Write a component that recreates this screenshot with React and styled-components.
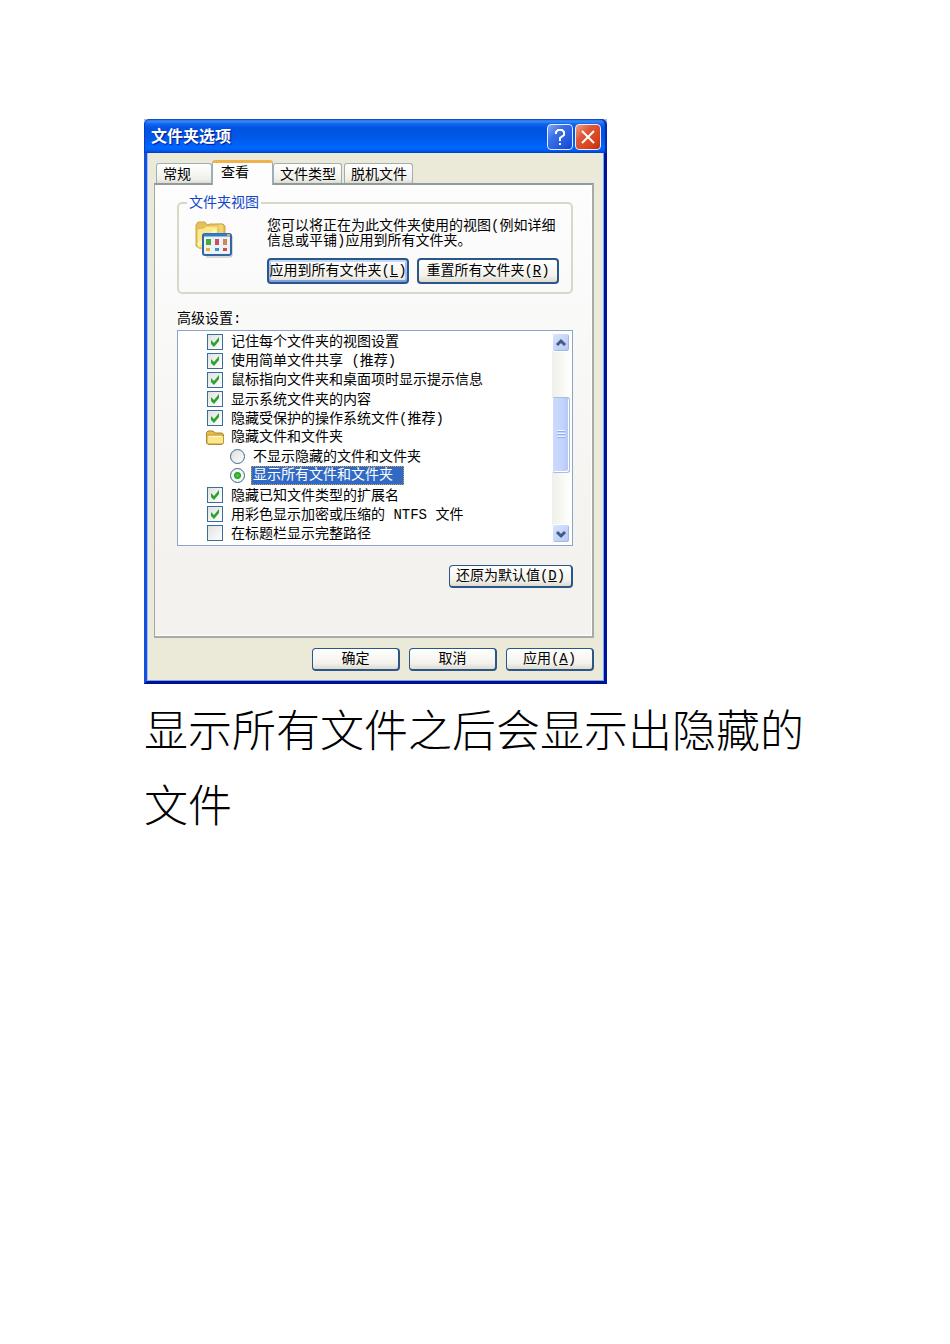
import { useState } from 'react';
import styled, { createGlobalStyle, css } from 'styled-components';

const GlobalStyle = createGlobalStyle`
	* {
		box-sizing: border-box;
	}

	body {
		margin: 0;
		background: #fff;
		color: #000;
		font-family: 'Liberation Mono', 'Noto Sans CJK SC', monospace;
		font-size: 14px;
		line-height: 15px;
	}

	button,
	input {
		margin: 0;
		font: inherit;
		color: inherit;
	}
`;

const TABS = ['常规', '查看', '文件类型', '脱机文件'];

const OPTIONS = [
	{ id: 'views', type: 'checkbox', label: '记住每个文件夹的视图设置', checked: true },
	{ id: 'sharing', type: 'checkbox', label: '使用简单文件共享 (推荐)', checked: true },
	{ id: 'hints', type: 'checkbox', label: '鼠标指向文件夹和桌面项时显示提示信息', checked: true },
	{ id: 'system', type: 'checkbox', label: '显示系统文件夹的内容', checked: true },
	{ id: 'protected', type: 'checkbox', label: '隐藏受保护的操作系统文件(推荐)', checked: true },
	{ id: 'hidden', type: 'folder', label: '隐藏文件和文件夹' },
	{ id: 'hide', type: 'radio', label: '不显示隐藏的文件和文件夹' },
	{ id: 'show', type: 'radio', label: '显示所有文件和文件夹' },
	{ id: 'extensions', type: 'checkbox', label: '隐藏已知文件类型的扩展名', checked: true },
	{ id: 'color', type: 'checkbox', label: '用彩色显示加密或压缩的 NTFS 文件', checked: true },
	{ id: 'path', type: 'checkbox', label: '在标题栏显示完整路径', checked: false },
];

const Page = styled.main`
	padding: 119px 142px 40px 144px;
`;

const Dialog = styled.section`
	width: 100%;
	max-width: 463px;
	background: #a9b8e0;
`;

const TitleBar = styled.header`
	display: flex;
	align-items: center;
	gap: 2px;
	height: 34px;
	padding: 2px 6px 0 7px;
	border-radius: 6px 6px 0 0;
	box-shadow: inset -2px 0 1px #0028a8, inset 1px 0 0 #0a3cc8;
	background: linear-gradient(
		#0a3fc0 0,
		#3a8dfb 2px,
		#1266ee 5px,
		#0054e0 9px,
		#0057e6 18px,
		#0066ff 28px,
		#0060f8 31px,
		#0040c4 34px
	);
`;

const Title = styled.h1`
	flex: 1;
	margin: 0;
	padding-top: 2px;
	color: #fff;
	font-size: 16px;
	line-height: 24px;
	font-weight: 700;
	text-shadow: 1px 1px 1px #0a1883;
`;

const CaptionButton = styled.button`
	display: grid;
	place-items: center;
	width: 26px;
	height: 26px;
	padding: 0;
	border: 1px solid #e4ecff;
	border-radius: 4px;
	background: ${({ $close }) =>
		$close
			? 'linear-gradient(135deg, #f0a080 0, #e0573a 35%, #d8401a 75%, #b83008)'
			: 'linear-gradient(135deg, #84a8f8 0, #3c70e8 35%, #2058e0 75%, #1444c8)'};
`;

const Body = styled.div`
	padding: 7px 10px 10px 7px;
	border: solid;
	border-width: 0 3px 3px;
	border-color: #00129a #00129a #00108c #1450d8;
	background: #ebe9d8;
	box-shadow: inset 1px 0 0 #9cc0fa, inset -1px -1px 0 #6ea8fa;
`;

const TabList = styled.div`
	display: flex;
	align-items: flex-end;
	gap: 2px;
	padding-left: 2px;
`;

const Tab = styled.button`
	height: 20px;
	padding: 2px 5px 0 6px;
	border: 1px solid #a0aeb4;
	border-bottom: 0;
	border-radius: 3px 3px 0 0;
	background: linear-gradient(#fff, #f0f0ea 80%, #dcdcd2);
	line-height: 16px;
	text-align: left;
	white-space: nowrap;

	&:first-child {
		min-width: 56px;
		margin-right: -2px;
	}

	${({ $active }) =>
		$active &&
		css`
			height: 25px;
			min-width: 61px;
			margin-right: -2px;
			margin-bottom: -2px;
			padding: 0 8px 3px;
			border-top: 3px solid #f0b24c;
			background: #fdfdfe;
			z-index: 1;
		`}
`;

const Panel = styled.div`
	padding: 9px 19px 48px 22px;
	border: solid;
	border-width: 2px 2px 2px 1px;
	border-color: #919b9c #a8aca8 #a8aca8 #a0a8a8;
	background: linear-gradient(#fdfdfe, #f3f2ee 85%);
	box-shadow: inset -1px -1px 0 #fff;
`;

const ViewGroup = styled.fieldset`
	display: flex;
	gap: 33px;
	min-width: 0;
	margin: 0;
	padding: 7px 9px 8px 15px;
	border: 2px solid #d8d7c8;
	border-radius: 5px;
`;

const Legend = styled.legend`
	margin-left: -7px;
	padding: 0 2px;
	color: #0f46c8;
	line-height: 18px;
`;

const GroupContent = styled.div`
	flex: 1;
`;

const Description = styled.p`
	margin: 0 0 9px;
	white-space: nowrap;
`;

const ButtonRow = styled.div`
	display: flex;
	justify-content: ${({ $end }) => ($end ? 'flex-end' : 'flex-start')};
	gap: ${({ $gap }) => $gap || 8}px;
	margin-top: ${({ $top }) => $top || 0}px;
`;

const Button = styled.button`
	width: ${({ $width }) => $width}px;
	height: ${({ $tall }) => ($tall ? 26 : 23)}px;
	padding: 0;
	border: 2px solid #2a5688;
	border-width: ${({ $tall }) => ($tall ? '2px' : '1px 2px 2px 1px')};
	border-radius: 4px;
	background: linear-gradient(#fff, #f3f2ec 70%, #dedbd0);
	box-shadow: ${({ $focused }) =>
		$focused
			? 'inset 0 2px 0 #c4d8fa, inset 0 -2px 0 #7ba0e4, inset 2px 0 0 #a4c0f4, inset -2px 0 0 #a4c0f4'
			: 'none'};
	line-height: 18px;
	white-space: nowrap;
`;

const Caption = styled.h2`
	margin: 16px 0 1px;
	font-size: 14px;
	line-height: 19px;
	font-weight: 400;
`;

const OptionBox = styled.div`
	display: flex;
	height: 216px;
	border: 1px solid #8ca5c4;
	background: #fff;
`;

const OptionList = styled.ul`
	flex: 1;
	display: grid;
	grid-auto-rows: 1fr;
	margin: 0;
	padding: 1px 0 2px;
	list-style: none;
`;

const Option = styled.li`
	display: flex;
	align-items: center;
	gap: 6px;
	padding-left: ${({ $type }) => ({ checkbox: 29, folder: 27, radio: 52 })[$type]}px;
	white-space: nowrap;
`;

const OptionLabel = styled.label`
	padding: 1px 2px 0;
	line-height: 18px;

	${({ $selected }) =>
		$selected &&
		css`
			padding: 0 10px 0 1px;
			border: 1px dotted #d8a040;
			background: #316ac5;
			color: #fff;
			line-height: 17px;
		`}
`;

const Mark = styled.span`
	display: grid;
	place-items: center;

	& > * {
		grid-area: 1 / 1;
	}

	svg {
		pointer-events: none;
	}
`;

const CheckInput = styled.input`
	appearance: none;
	width: 16px;
	height: 16px;
	border: 1px solid #3c6c9c;
	background: linear-gradient(135deg, #e0e2e0, #fff);
`;

const RadioInput = styled.input`
	appearance: none;
	width: 15px;
	height: 15px;
	border: 1px solid #3c668c;
	border-radius: 50%;
	background: linear-gradient(135deg, #dcdcd7, #fff);

	&:checked {
		background: radial-gradient(circle, #58d050 0, #21a121 3px, transparent 4px), #f4f6f4;
	}
`;

const ScrollBar = styled.div`
	display: grid;
	grid-template-rows: 19px 45fr 76fr 51fr 19px;
	width: 18px;
	margin: 2px 2px 2px 0;
	background: linear-gradient(90deg, #f0f0ea, #fefefb);
`;

const ScrollButton = styled.button`
	display: grid;
	place-items: center;
	padding: 0;
	border: 1px solid #fff;
	border-radius: 3px;
	background: linear-gradient(135deg, #d8e4fe, #b4c8f6);
	box-shadow: inset -1px -1px 0 #a4b8e4;
`;

const Thumb = styled.div`
	grid-row: 3;
	display: grid;
	place-items: center;
	border: 1px solid #a8bce8;
	border-left-color: #fff;
	border-radius: 3px;
	background: linear-gradient(90deg, #cbdafd, #c3d3fd 60%, #b4c6f6);
	box-shadow: inset -1px -1px 0 #fff;
`;

const ScrollEnd = styled(ScrollButton)`
	grid-row: 5;
`;

const Note = styled.p`
	margin: 7px 0 0;
	font-family: 'Noto Sans CJK SC', sans-serif;
	font-size: 44px;
	line-height: 75px;
	font-weight: 300;
`;

const FolderIcon = () => (
	<svg width="20" height="17" viewBox="0 0 20 17" aria-hidden="true">
		<path d="M1.5 14V3.5L3 2h5l2 2h7l1.5 1.5V14L17 15.5H3z" fill="#e8bc48" stroke="#a8822c" />
		<path d="M2 14V7.5L3.5 6H17l1.5 1.5V14L17 15H3z" fill="#fbe68c" stroke="#c09838" />
		<path d="M4 7.5h12" stroke="#fff8d0" />
	</svg>
);

const ViewIcon = () => (
	<svg width="40" height="40" viewBox="0 0 40 40" aria-hidden="true">
		<path d="M2 6l2-3h7l2 3 3-1h13l2 2v19l-4 3H5l-3-2z" fill="#e6c058" stroke="#d0a440" />
		<path d="M14 6l14-1 2 2v12H14z" fill="#f3d470" stroke="#d8b04c" />
		<path d="M3 10l7-1 2-2h12v20l-2 2H5l-2-2z" fill="#fbe890" stroke="#dcb850" />
		<path d="M4 26l18-15" stroke="#fff6bc" strokeWidth="3" />
		<path d="M12 38h25l1-2V17" fill="none" stroke="#b4b8c0" />
		<rect x="9" y="15" width="28" height="21" rx="2" fill="#edf2f7" stroke="#3564a4" strokeWidth="2" />
		<path d="M10 16h26" stroke="#2f7dcc" strokeWidth="3" />
		<path d="M33 16h3" stroke="#e8a080" strokeWidth="2" />
		<path d="M12 20h5v6h-5z" fill="#45aa3c" />
		<path d="M21 20h4v6h-4z" fill="#cc5060" />
		<path d="M29 20h4v6h-4z" fill="#cc8858" />
		<path d="M12 29h4v3h-4z" fill="#ecb030" />
		<path d="M21 29h4v3h-4z" fill="#3c8fd4" />
		<path d="M29 29h4v3h-4z" fill="#d84c38" />
	</svg>
);

const Arrow = ({ down }) => (
	<svg width="12" height="10" viewBox="0 0 12 10" fill="none" aria-hidden="true">
		<path d={down ? 'M2 3l4 4 4-4' : 'M2 7l4-4 4 4'} stroke="#46597e" strokeWidth="3" />
	</svg>
);

const OptionRow = ({ option, checked, onChange }) => {
	const { id, type, label } = option;

	if (type === 'folder') {
		return (
			<Option $type={type}>
				<FolderIcon />
				<span>{label}</span>
			</Option>
		);
	}

	return (
		<Option $type={type}>
			<Mark>
				{type === 'checkbox' ? (
					<CheckInput id={id} type="checkbox" checked={checked} onChange={onChange} />
				) : (
					<RadioInput id={id} type="radio" name="hidden" checked={checked} onChange={onChange} />
				)}
				{type === 'checkbox' && checked && (
					<svg width="10" height="10" viewBox="0 0 10 10" aria-hidden="true">
						<path d="M1 3l3 3 5-6v4L4 10 1 7z" fill="#2aa42c" />
					</svg>
				)}
			</Mark>
			<OptionLabel htmlFor={id} $selected={type === 'radio' && checked}>
				{label}
			</OptionLabel>
		</Option>
	);
};

const App = () => {
	const [activeTab, setActiveTab] = useState('查看');
	const [hiddenMode, setHiddenMode] = useState('show');
	const [options, setOptions] = useState(OPTIONS);

	const toggleOption = ({ id, type }) => {
		if (type === 'radio') {
			setHiddenMode(id);
			return;
		}
		setOptions(
			options.map((item) => (item.id === id ? { ...item, checked: !item.checked } : item)),
		);
	};

	return (
		<Page>
			<GlobalStyle />
			<Dialog role="dialog" aria-labelledby="dialog-title">
				<TitleBar>
					<Title id="dialog-title">文件夹选项</Title>
					<CaptionButton type="button" aria-label="帮助">
						<svg width="16" height="18" viewBox="0 0 16 18" fill="none" stroke="#fff" strokeWidth="2">
							<path d="M4 6V4l2-2h4l2 2v3L8 10v3M8 15v2" />
						</svg>
					</CaptionButton>
					<CaptionButton type="button" aria-label="关闭" $close>
						<svg width="16" height="16" viewBox="0 0 16 16" stroke="#fff" strokeWidth="2">
							<path d="M2 2l12 12M14 2L2 14" />
						</svg>
					</CaptionButton>
				</TitleBar>
				<Body>
					<TabList role="tablist">
						{TABS.map((tab) => (
							<Tab
								key={tab}
								type="button"
								role="tab"
								aria-selected={tab === activeTab}
								$active={tab === activeTab}
								onClick={() => setActiveTab(tab)}
							>
								{tab}
							</Tab>
						))}
					</TabList>
					<Panel role="tabpanel">
						<ViewGroup>
							<Legend>文件夹视图</Legend>
							<ViewIcon />
							<GroupContent>
								<Description>
									您可以将正在为此文件夹使用的视图(例如详细
									<br />
									信息或平铺)应用到所有文件夹。
								</Description>
								<ButtonRow>
									<Button type="button" $width={142} $tall $focused>
										应用到所有文件夹(<u>L</u>)
									</Button>
									<Button type="button" $width={142} $tall>
										重置所有文件夹(<u>R</u>)
									</Button>
								</ButtonRow>
							</GroupContent>
						</ViewGroup>
						<Caption>高级设置:</Caption>
						<OptionBox>
							<OptionList>
								{options.map((option) => (
									<OptionRow
										key={option.id}
										option={option}
										checked={option.type === 'radio' ? option.id === hiddenMode : option.checked}
										onChange={() => toggleOption(option)}
									/>
								))}
							</OptionList>
							<ScrollBar>
								<ScrollButton type="button" aria-label="向上滚动">
									<Arrow />
								</ScrollButton>
								<Thumb>
									<svg width="8" height="10" viewBox="0 0 8 10" aria-hidden="true">
										<path d="M0 0h8v1H0zM0 3h8v1H0zM0 6h8v1H0z" fill="#eef4fe" />
										<path d="M0 1h8v1H0zM0 4h8v1H0zM0 7h8v1H0z" fill="#8cb0f8" />
									</svg>
								</Thumb>
								<ScrollEnd type="button" aria-label="向下滚动">
									<Arrow down />
								</ScrollEnd>
							</ScrollBar>
						</OptionBox>
						<ButtonRow $end $top={19}>
							<Button type="button" $width={124}>
								还原为默认值(<u>D</u>)
							</Button>
						</ButtonRow>
					</Panel>
					<ButtonRow $end $gap={9} $top={10}>
						<Button type="button" $width={88}>
							确定
						</Button>
						<Button type="button" $width={88}>
							取消
						</Button>
						<Button type="button" $width={88}>
							应用(<u>A</u>)
						</Button>
					</ButtonRow>
				</Body>
			</Dialog>
			<Note>显示所有文件之后会显示出隐藏的文件</Note>
		</Page>
	);
};

export default App;
